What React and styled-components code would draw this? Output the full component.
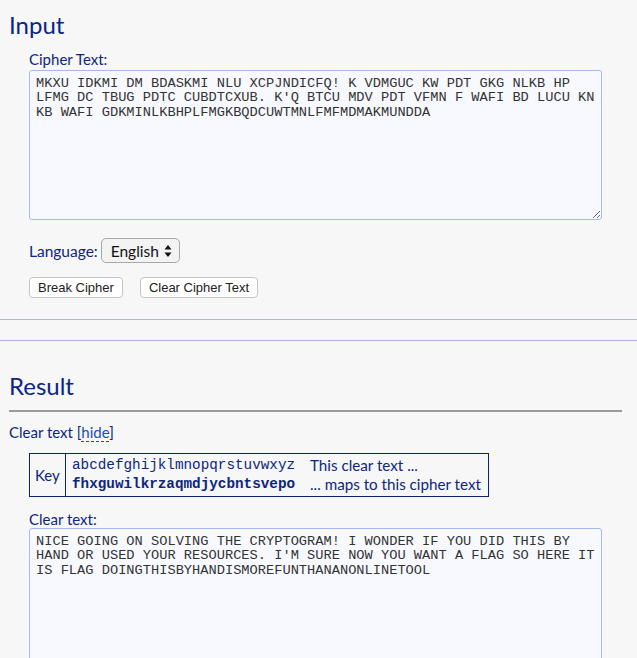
import React from "react";
import styled, { createGlobalStyle } from "styled-components";

const Global = createGlobalStyle`
  html, body { margin: 0; padding: 0; }
  body {
    background: #f7f7f7;
    font-family: "Lato", "Noto Sans", sans-serif;
    color: #0c2680;
  }
`;

const Page = styled.div`
  width: 637px;
  min-height: 658px;
  overflow: hidden;
`;

const Section = styled.section`
  padding: 0 15px 0 9px;
  border-bottom: ${(p) => (p.$bottom ? "1px solid #a8b8ea" : "none")};
  border-top: ${(p) => (p.$top ? "1px solid #a8b8ea" : "none")};
  margin-top: ${(p) => p.$mt || 0}px;
`;

const Heading = styled.h2`
  margin: 0;
  padding-top: ${(p) => p.$pt}px;
  font-size: 24px;
  line-height: 30px;
  font-weight: 400;
  color: #0a2585;
`;

const Indent = styled.div`
  padding-left: 20px;
`;

const Label = styled.label`
  display: block;
  font-size: 15px;
  line-height: 18px;
  margin-top: ${(p) => p.$mt || 0}px;
  margin-bottom: ${(p) => p.$mb || 0}px;
  color: #0c2680;
`;

const TextBox = styled.textarea`
  display: block;
  box-sizing: border-box;
  width: 573px;
  height: ${(p) => p.$h}px;
  margin: 0;
  padding: 6px 6px;
  border: 1px solid #a9b8ea;
  border-radius: 3px;
  background: #f8f9ff;
  font-family: "Liberation Mono", "Courier New", monospace;
  font-size: 13.7px;
  line-height: 14.3px;
  color: #333;
  resize: vertical;
  outline: none;
`;

const LangRow = styled.div`
  display: flex;
  align-items: center;
  gap: 3px;
  margin-top: 18px;
  height: 25px;
  font-size: 15.5px;
`;

const SelectBox = styled.div`
  box-sizing: border-box;
  width: 79px;
  height: 25px;
  border: 1px solid #a8a8a8;
  border-radius: 5px;
  background: #f3f3f3;
  display: flex;
  align-items: center;
  justify-content: space-between;
  padding: 0 7px 0 9px;
  font-size: 15.5px;
  color: #111;
`;

const Buttons = styled.div`
  display: flex;
  gap: 17px;
  margin-top: 14px;
`;

const Button = styled.button`
  box-sizing: border-box;
  height: 21px;
  padding: 0 8px;
  border: 1px solid #c4c4c4;
  border-radius: 4px;
  background: #fff;
  font-family: "Liberation Sans", Arial, sans-serif;
  font-size: 13px;
  color: #222;
  line-height: 19px;
`;

const Rule = styled.div`
  height: 2px;
  background: #9a9a9a;
  margin-top: 9px;
`;

const ClearLine = styled.div`
  margin-top: 11px;
  font-size: 15px;
  line-height: 18px;
`;

const Link = styled.span`
  color: #1a4bc4;
  border-bottom: 1px dashed #1a4bc4;
`;

const KeyTable = styled.table`
  border-collapse: collapse;
  margin-top: 12px;
  border: 1.5px solid #0c2470;
  width: 460px;
`;

const KeyCell = styled.td`
  border-right: 1px solid #0c2470;
  padding: 0 5px;
  font-size: 15px;
  width: 25px;
  vertical-align: middle;
`;

const MonoCell = styled.td`
  font-family: "Liberation Mono", "Courier New", monospace;
  font-size: 14.3px;
  font-weight: ${(p) => (p.$bold ? 700 : 400)};
  color: #0c2680;
  padding: ${(p) => (p.$bold ? "0 6px 2px 6px" : "2px 6px 0 6px")};
  line-height: 19px;
  white-space: nowrap;
  width: 228px;
`;

const NoteCell = styled.td`
  font-size: 15.2px;
  line-height: 19px;
  padding: ${(p) => (p.$second ? "0 4px 2px 4px" : "2px 4px 0 4px")};
  white-space: nowrap;
`;

const Arrows = () => (
  <svg width="8" height="14" viewBox="0 0 8 14">
    <path d="M4 1 L7.5 5.5 L0.5 5.5 Z" fill="#111" />
    <path d="M4 13 L7.5 8.5 L0.5 8.5 Z" fill="#111" />
  </svg>
);

const cipher =
  "MKXU IDKMI DM BDASKMI NLU XCPJNDICFQ! K VDMGUC KW PDT GKG NLKB HP LFMG DC TBUG PDTC CUBDTCXUB. K'Q BTCU MDV PDT VFMN F WAFI BD LUCU KN KB WAFI GDKMINLKBHPLFMGKBQDCUWTMNLFMFMDMAKMUNDDA";
const clear =
  "NICE GOING ON SOLVING THE CRYPTOGRAM! I WONDER IF YOU DID THIS BY HAND OR USED YOUR RESOURCES. I'M SURE NOW YOU WANT A FLAG SO HERE IT IS FLAG DOINGTHISBYHANDISMOREFUNTHANANONLINETOOL";

export default function App() {
  return (
    <Page>
      <Global />
      <Section $bottom>
        <Heading $pt={10}>Input</Heading>
        <Indent>
          <Label $mt={10} $mb={2}>Cipher Text:</Label>
          <TextBox $h={150} defaultValue={cipher} readOnly />
          <LangRow>
            <span>Language:</span>
            <SelectBox>
              <span>English</span>
              <Arrows />
            </SelectBox>
          </LangRow>
          <Buttons>
            <Button>Break Cipher</Button>
            <Button>Clear Cipher Text</Button>
          </Buttons>
          <div style={{ height: 21 }} />
        </Indent>
      </Section>
      <Section $top $mt={20}>
        <Heading $pt={30}>Result</Heading>
        <Rule />
        <ClearLine>
          Clear text [<Link>hide</Link>]
        </ClearLine>
        <Indent>
          <KeyTable>
            <tbody>
              <tr>
                <KeyCell rowSpan={2}>Key</KeyCell>
                <MonoCell>abcdefghijklmnopqrstuvwxyz</MonoCell>
                <NoteCell>This clear text ...</NoteCell>
              </tr>
              <tr>
                <MonoCell $bold>fhxguwilkrzaqmdjycbntsvepo</MonoCell>
                <NoteCell $second>... maps to this cipher text</NoteCell>
              </tr>
            </tbody>
          </KeyTable>
          <Label $mt={13}>Clear text:</Label>
          <TextBox $h={150} defaultValue={clear} readOnly />
        </Indent>
      </Section>
    </Page>
  );
}
